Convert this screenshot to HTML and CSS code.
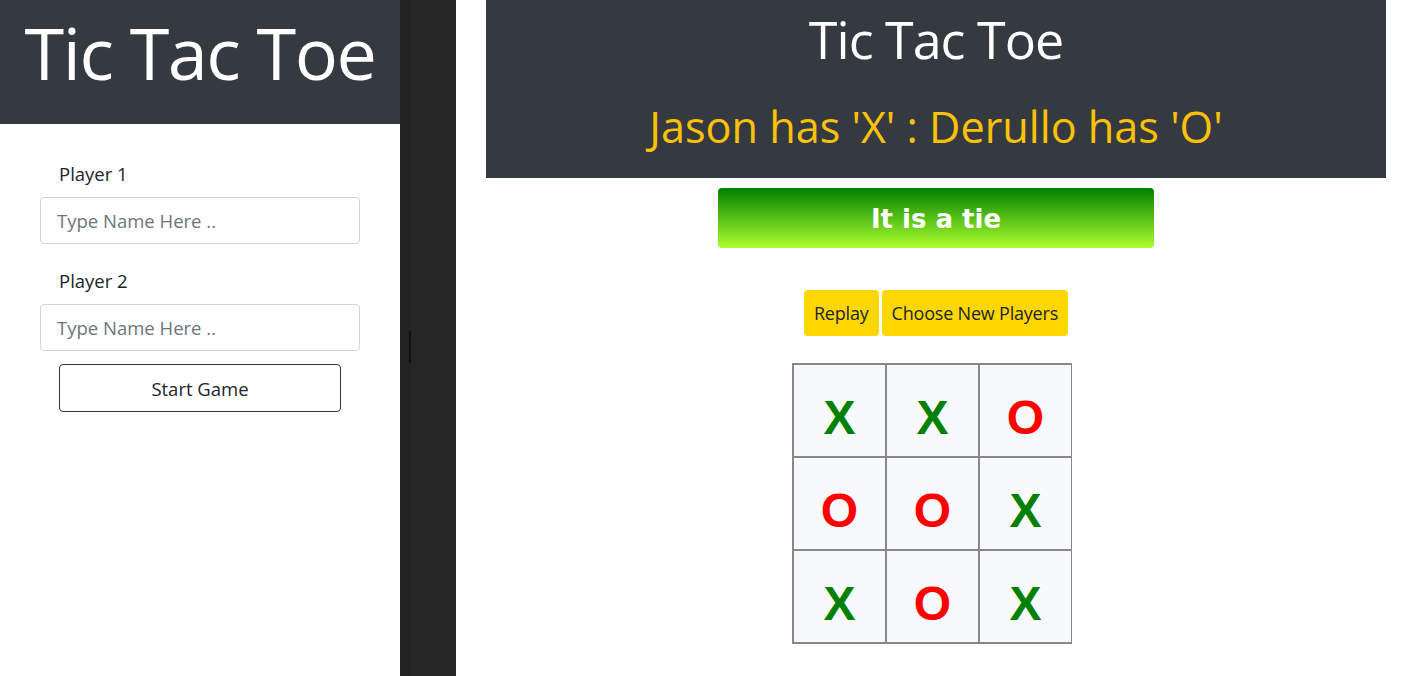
FILE: index.html
```html
<!DOCTYPE html>
<html lang="en">
<head>
<meta charset="utf-8">
<title>Tic Tac Toe</title>
<link rel="stylesheet" href="styles.css">
</head>
<body>
<div class="app">
  <aside class="setup">
    <header class="setup-header"><h1 class="setup-title">Tic Tac Toe</h1></header>
    <form class="setup-form">
      <label class="field-label" for="p1">Player 1</label>
      <input class="field-input" id="p1" type="text" placeholder="Type Name Here ..">
      <label class="field-label second" for="p2">Player 2</label>
      <input class="field-input" id="p2" type="text" placeholder="Type Name Here ..">
      <button class="start-btn" type="button">Start Game</button>
    </form>
  </aside>
  <div class="divider">
    <div class="divider-edge"><span class="divider-handle"></span></div>
    <div class="divider-body"></div>
  </div>
  <main class="game">
    <header class="game-header">
      <h1 class="game-title">Tic Tac Toe</h1>
      <p class="game-players">Jason has 'X' : Derullo has 'O'</p>
    </header>
    <div class="result">It is a tie</div>
    <div class="actions">
      <button class="action-btn" type="button">Replay</button>
      <button class="action-btn" type="button">Choose New Players</button>
    </div>
    <div class="board">
      <div class="cell x">X</div>
      <div class="cell x">X</div>
      <div class="cell o">O</div>
      <div class="cell o">O</div>
      <div class="cell o">O</div>
      <div class="cell x">X</div>
      <div class="cell x">X</div>
      <div class="cell o">O</div>
      <div class="cell x">X</div>
    </div>
  </main>
</div>
</body>
</html>
```
FILE: styles.css
```css
* { box-sizing: border-box; }
html, body { margin: 0; padding: 0; }
body {
  font-family: "Open Sans", "Noto Sans", sans-serif;
  background: #fff;
  color: #212529;
}
.app {
  display: flex;
  height: 676px;
  overflow: hidden;
}
.setup {
  width: 400px;
  flex: none;
  background: #fff;
}
.setup-header {
  background: #343a40;
  height: 124px;
  display: flex;
  align-items: center;
  justify-content: center;
}
.setup-title {
  margin: 0;
  color: #fff;
  font-weight: 400;
  font-size: 72px;
  letter-spacing: -1.5px;
  line-height: 1;
  padding-bottom: 20px;
}
.setup-form {
  display: flex;
  flex-direction: column;
  padding: 38px 40px 0 40px;
}
.field-label {
  font-size: 18.5px;
  line-height: 24px;
  padding-left: 19px;
  margin-bottom: 11px;
}
.field-label.second { margin-top: 25px; }
.field-input {
  width: 320px;
  height: 47px;
  border: 1px solid #ced4da;
  border-radius: 4px;
  padding: 0 16px;
  font-family: inherit;
  font-size: 18.5px;
  color: #495057;
}
.field-input::placeholder { color: #6c757d; }
.start-btn {
  margin: 13px 0 0 19px;
  width: 282px;
  height: 48px;
  background: #fff;
  border: 1px solid #343a40;
  border-radius: 4px;
  font-family: inherit;
  font-size: 18.5px;
  color: #212529;
}
.divider {
  width: 56px;
  flex: none;
  display: flex;
}
.divider-edge {
  width: 11px;
  background: #222;
  display: flex;
  align-items: flex-start;
  justify-content: flex-end;
  padding-top: 331px;
}
.divider-handle {
  width: 2px;
  height: 32px;
  background: #111;
}
.divider-body {
  flex: 1;
  background: #262626;
}
.game {
  flex: 1;
  display: flex;
  flex-direction: column;
  align-items: center;
  padding: 0 20px 0 30px;
}
.game-header {
  width: 900px;
  height: 178px;
  background: #343a40;
  text-align: center;
  padding-top: 7px;
}
.game-title {
  margin: 0;
  color: #fff;
  font-weight: 400;
  font-size: 52px;
  line-height: 64px;
  letter-spacing: -1px;
}
.game-players {
  margin: 26px 0 0;
  color: #ffc107;
  font-size: 43.2px;
  line-height: 60px;
  letter-spacing: 0;
}
.result {
  margin-top: 10px;
  width: 436px;
  height: 60px;
  border-radius: 4px;
  background: linear-gradient(to bottom, #008000, #adff2f);
  color: #fff;
  font-family: "Comic Sans MS", "DejaVu Sans", sans-serif;
  font-weight: bold;
  font-size: 26px;
  display: flex;
  align-items: center;
  justify-content: center;
  padding-top: 2px;
}
.actions {
  margin-top: 42px;
  display: flex;
  gap: 3px;
}
.action-btn {
  height: 46px;
  padding: 0 10px;
  background: #ffd700;
  border: none;
  border-radius: 4px;
  font-family: inherit;
  font-size: 18px;
  letter-spacing: -0.2px;
  color: #212529;
}
.board {
  margin-top: 27px;
  margin-right: 8px;
  display: grid;
  grid-template-columns: repeat(3, 93px);
  grid-template-rows: repeat(3, 93px);
  border: 1px solid #888;
  width: 280px;
}
.cell {
  border: 1px solid #888;
  background: #f8f9fa;
  display: flex;
  align-items: center;
  justify-content: center;
  font-family: "Liberation Sans", Arial, sans-serif;
  font-weight: bold;
  font-size: 48px;
  padding-top: 14px;
}
.cell.x { color: #008000; }
.cell.o { color: #ff0000; }
```
